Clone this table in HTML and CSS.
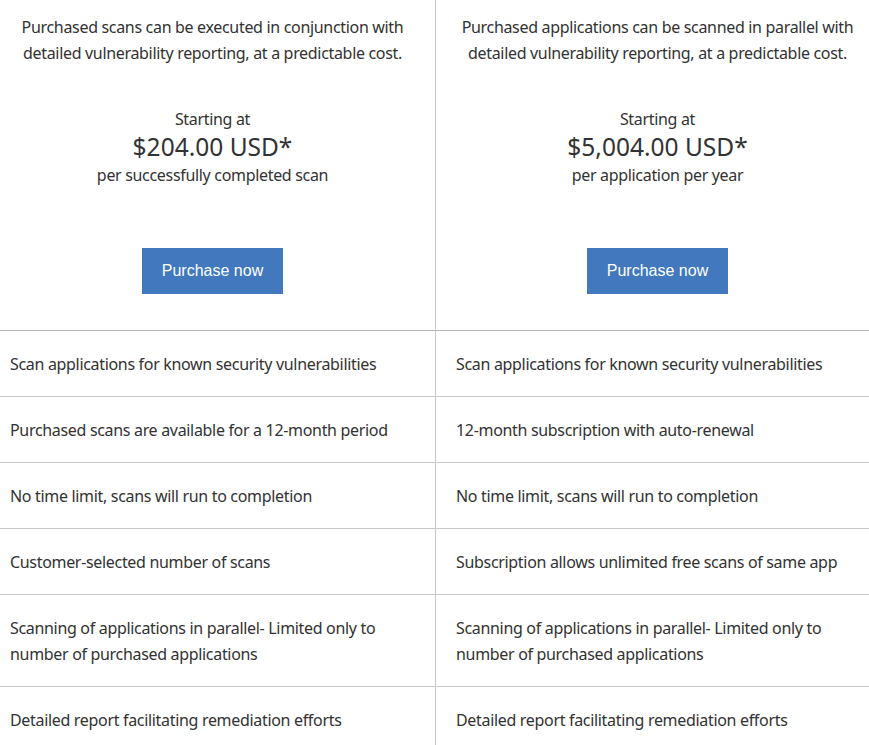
FILE: index.html
```html
<!DOCTYPE html>
<html lang="en">
<head>
<meta charset="utf-8">
<title>Pricing</title>
<link rel="stylesheet" href="styles.css">
</head>
<body>
<div class="plans">
  <div class="cell hero left">
    <p class="desc">Purchased scans can be executed in conjunction with detailed vulnerability reporting, at a predictable cost.</p>
    <div class="price">
      <div>Starting at</div>
      <div class="amount">$204.00 USD*</div>
      <div>per successfully completed scan</div>
    </div>
    <a class="btn" href="#">Purchase now</a>
  </div>
  <div class="cell hero right">
    <p class="desc">Purchased applications can be scanned in parallel with detailed vulnerability reporting, at a predictable cost.</p>
    <div class="price">
      <div>Starting at</div>
      <div class="amount">$5,004.00 USD*</div>
      <div>per application per year</div>
    </div>
    <a class="btn" href="#">Purchase now</a>
  </div>

  <div class="cell feat left">Scan applications for known security vulnerabilities</div>
  <div class="cell feat right">Scan applications for known security vulnerabilities</div>

  <div class="cell feat left">Purchased scans are available for a 12-month period</div>
  <div class="cell feat right">12-month subscription with auto-renewal</div>

  <div class="cell feat left">No time limit, scans will run to completion</div>
  <div class="cell feat right">No time limit, scans will run to completion</div>

  <div class="cell feat left">Customer-selected number of scans</div>
  <div class="cell feat right">Subscription allows unlimited free scans of same app</div>

  <div class="cell feat left">Scanning of applications in parallel- Limited only to number of purchased applications</div>
  <div class="cell feat right">Scanning of applications in parallel- Limited only to number of purchased applications</div>

  <div class="cell feat left">Detailed report facilitating remediation efforts</div>
  <div class="cell feat right">Detailed report facilitating remediation efforts</div>
</div>
</body>
</html>
```

FILE: styles.css
```css
html, body {
  margin: 0;
  padding: 0;
  background: #ffffff;
}

body {
  font-family: "Noto Sans", "Open Sans", sans-serif;
  font-size: 16px;
  line-height: 26px;
  letter-spacing: -0.32px;
  color: #323232;
  overflow: hidden;
}

.plans {
  display: grid;
  grid-template-columns: 436px 1fr;
  width: 869px;
}

.cell {
  box-sizing: border-box;
}

.cell.left {
  border-right: 1px solid #c8c8c8;
  padding-left: 10px;
  padding-right: 20px;
}

.cell.right {
  padding-left: 20px;
  padding-right: 10px;
}

.hero {
  height: 330px;
  padding-top: 14px;
  text-align: center;
  display: flex;
  flex-direction: column;
  align-items: center;
}

.desc {
  margin: 0;
}

.price {
  margin-top: 40px;
}

.amount {
  font-size: 24.5px;
  line-height: 30px;
  letter-spacing: 0;
}

.btn {
  margin-top: 60px;
  display: block;
  height: 46px;
  line-height: 46px;
  padding: 0 20px;
  background: #4178be;
  color: #ffffff;
  text-decoration: none;
  font-family: "Liberation Sans", Arial, sans-serif;
  font-size: 16px;
  letter-spacing: 0;
}

.feat {
  border-top: 1px solid #c8c8c8;
  padding-top: 20px;
  padding-bottom: 19px;
}

.feat:nth-child(3), .feat:nth-child(4) {
  border-top-color: #b4b4b4;
}
```
